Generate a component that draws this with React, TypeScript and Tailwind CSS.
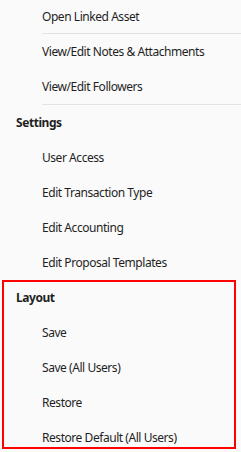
import React from 'react';

const groups = [
  { title: 'Settings', items: ['User Access', 'Edit Transaction Type', 'Edit Accounting', 'Edit Proposal Templates'] },
  { title: 'Layout', items: ['Save', 'Save (All Users)', 'Restore', 'Restore Default (All Users)'] },
];

export default function App() {
  return (
    <div className="relative h-[452px] w-[241px] overflow-hidden bg-[#fafafa] font-['Noto_Sans',sans-serif] text-[12px] tracking-[-0.45px] text-[#1f1f1f]">
      {/* first row is partly scrolled out */}
      <div className="flex h-[33px] items-center pl-[42px]">Open Linked Asset</div>
      <div className="ml-[42px] h-px bg-[#e3e3e3]" />
      <div className="flex h-[35px] items-center pl-[42px]">View/Edit Notes &amp; Attachments</div>
      <div className="flex h-[35px] items-center pl-[42px]">View/Edit Followers</div>
      <div className="ml-[42px] h-px bg-[#e3e3e3]" />

      {groups.map((g) => (
        <div key={g.title}>
          <div className="flex h-[35px] items-center pl-4 font-bold">{g.title}</div>
          {g.items.map((item) => (
            <div key={item} className="flex h-[35px] items-center pl-[42px]">
              {item}
            </div>
          ))}
        </div>
      ))}

      {/* highlight annotation */}
      <div className="pointer-events-none absolute left-[2px] top-[280px] h-[169px] w-[234px] border-2 border-[#ff0000]" />
    </div>
  );
}
